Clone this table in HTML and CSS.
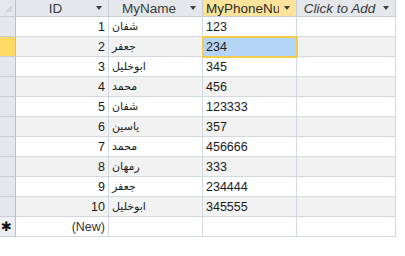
FILE: index.html
```html
<!DOCTYPE html>
<html>
<head>
<meta charset="utf-8">
<link rel="stylesheet" href="styles.css">
</head>
<body>
<div class="sheet">
  <div class="grid">
    <div class="hd corner"><svg width="15" height="16" viewBox="0 0 15 16"><polygon points="12,2 12,12 2,12" fill="#d3d7dd"/><polygon points="12,2 12,4 4,12 2,12" fill="#eef0f3"/></svg></div>
    <div class="hd"><span class="lbl">ID</span><span class="arr"></span></div>
    <div class="hd"><span class="lbl">MyName</span><span class="arr"></span></div>
    <div class="hd sel-hd"><span class="lbl left">MyPhoneNumber</span><span class="arr"></span></div>
    <div class="hd"><span class="lbl it">Click to Add</span><span class="arr"></span></div>

    <div class="rs"></div><div class="c num">1</div><div class="c ar">شفان</div><div class="c">123</div><div class="c"></div>
    <div class="rs cur alt"></div><div class="c num alt">2</div><div class="c ar alt">جعفر</div><div class="c sel">234</div><div class="c alt"></div>
    <div class="rs"></div><div class="c num">3</div><div class="c ar">ابوخليل</div><div class="c">345</div><div class="c"></div>
    <div class="rs"></div><div class="c num alt">4</div><div class="c ar alt">محمد</div><div class="c alt">456</div><div class="c alt"></div>
    <div class="rs"></div><div class="c num">5</div><div class="c ar">شفان</div><div class="c">123333</div><div class="c"></div>
    <div class="rs"></div><div class="c num alt">6</div><div class="c ar alt">ياسين</div><div class="c alt">357</div><div class="c alt"></div>
    <div class="rs"></div><div class="c num">7</div><div class="c ar">محمد</div><div class="c">456666</div><div class="c"></div>
    <div class="rs"></div><div class="c num alt">8</div><div class="c ar alt">رمهان</div><div class="c alt">333</div><div class="c alt"></div>
    <div class="rs"></div><div class="c num">9</div><div class="c ar">جعفر</div><div class="c">234444</div><div class="c"></div>
    <div class="rs"></div><div class="c num alt">10</div><div class="c ar alt">ابوخليل</div><div class="c alt">345555</div><div class="c alt"></div>
    <div class="rs star">✱</div><div class="c num newr">(New)</div><div class="c"></div><div class="c"></div><div class="c"></div>
  </div>
</div>
</body>
</html>
```
FILE: styles.css
```css
html, body {
  margin: 0;
  padding: 0;
  background: #ffffff;
}
.sheet {
  width: 405px;
  height: 256px;
  overflow: hidden;
  font-family: "Liberation Sans", "DejaVu Sans", sans-serif;
  color: #1a1a1a;
}
.grid {
  display: grid;
  grid-template-columns: 16px 93px 94px 94px 99px;
  grid-template-rows: 17px repeat(11, 20px);
  width: 396px;
}
.hd {
  background: #e4e7ec;
  border-right: 1px solid #c9ced6;
  border-bottom: 1px solid #c9ced6;
  display: flex;
  align-items: center;
  overflow: hidden;
  font-size: 13.5px;
  color: #3a3a3a;
  position: relative;
}
.hd.corner {
  background: #e4e7ec;
  border-right: 1px solid #b9bfc8;
}
.corner svg { display: block; }
.lbl {
  flex: 1;
  min-width: 0;
  text-align: center;
  white-space: nowrap;
  overflow: hidden;
  padding-left: 4px;
}
.lbl.left {
  text-align: left;
  padding-left: 3px;
}
.lbl.it { font-style: italic; }
.arr {
  flex: none;
  width: 0;
  height: 0;
  border-left: 3.5px solid transparent;
  border-right: 3.5px solid transparent;
  border-top: 4px solid #3c3c3c;
  margin: 0 6px 0 5px;
}
.sel-hd {
  background: #fbe49a;
  color: #2b2b2b;
}
.rs {
  background: #e4e7ec;
  border-right: 1px solid #b9bfc8;
  border-bottom: 1px solid #c9ced6;
}
.rs.cur { background: #ffd964; }
.rs.star {
  display: flex;
  align-items: center;
  justify-content: center;
  font-size: 13px;
  color: #111;
  font-family: "DejaVu Sans", sans-serif;
  padding-right: 2px;
  background: #eceef1;
}
.c {
  background: #ffffff;
  border-right: 1px solid #d3d9e4;
  border-bottom: 1px solid #d3d9e4;
  display: flex;
  align-items: center;
  padding: 0 3px;
  font-size: 12.5px;
  white-space: nowrap;
  overflow: hidden;
  position: relative;
}
.c.alt { background: #f2f2f2; }
.c.num { justify-content: flex-end; }
.c.ar {
  font-family: "DejaVu Sans", sans-serif;
  font-size: 11px;
}
.c.newr { color: #333; }
.c.sel {
  background: #b5d5f7;
  outline: 2px solid #f4cc48;
  outline-offset: -1px;
  z-index: 2;
}
```
